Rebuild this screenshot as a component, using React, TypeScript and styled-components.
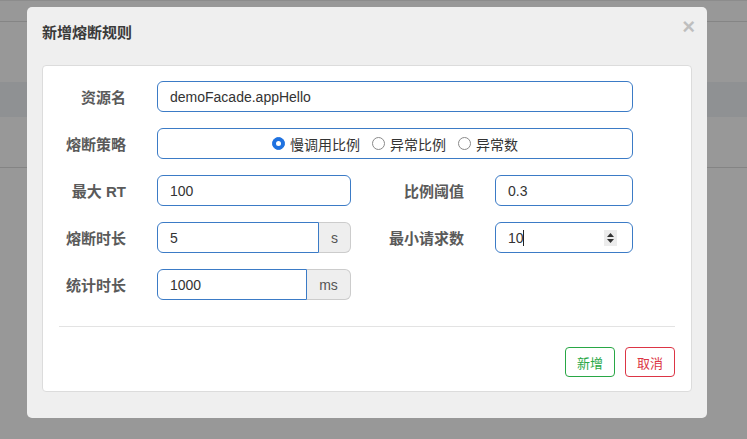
import React from 'react';
import styled, { createGlobalStyle } from 'styled-components';

const GlobalStyle = createGlobalStyle`
  html, body {
    margin: 0;
    padding: 0;
  }
  body {
    font-family: "Liberation Sans", "Noto Sans CJK SC", sans-serif;
    background: #989898;
  }
  * {
    box-sizing: border-box;
  }
`;

const Page = styled.div`
  position: relative;
  width: 747px;
  height: 439px;
  overflow: hidden;
  background: #989898;
  display: flex;
  flex-direction: column;
`;

// the page behind the backdrop, only a few rules show through
const Rule = styled.div<{ $top: number; $color?: string; $h?: number }>`
  margin-top: ${(p) => p.$top}px;
  height: ${(p) => p.$h ?? 1}px;
  background: ${(p) => p.$color ?? '#858585'};
  flex-shrink: 0;
`;

const Modal = styled.div`
  position: absolute;
  left: 27px;
  top: 7px;
  width: 680px;
  background: #efefef;
  border-radius: 5px;
  padding: 15px 15px 26px;
`;

const Title = styled.h4`
  margin: 0 0 21px;
  font-size: 15px;
  line-height: 22px;
  font-weight: 600;
  color: #3a3a3a;
`;

const Close = styled.button`
  position: absolute;
  top: 9px;
  right: 12px;
  border: none;
  background: transparent;
  padding: 0;
  font-family: "Liberation Sans", sans-serif;
  font-size: 22px;
  line-height: 22px;
  font-weight: bold;
  color: #000;
  opacity: 0.2;
  cursor: pointer;
`;

const Panel = styled.div`
  background: #fff;
  border: 1px solid #dcdcdc;
  border-radius: 4px;
  padding: 15px 16px 14px;
`;

const Form = styled.div`
  display: grid;
  grid-template-columns: 67px 194px 82px 138px;
  grid-auto-rows: 31px;
  column-gap: 31px;
  row-gap: 16px;
`;

const Label = styled.label`
  display: flex;
  align-items: center;
  justify-content: flex-end;
  font-size: 15px;
  font-weight: 600;
  color: #5a5a5a;
  white-space: nowrap;
`;

const Field = styled.div<{ $span?: number }>`
  grid-column: span ${(p) => p.$span ?? 1};
  display: flex;
  position: relative;
`;

const Input = styled.input<{ $addon?: boolean }>`
  flex: 1;
  min-width: 0;
  height: 31px;
  border: 1px solid #3b7bc6;
  border-radius: ${(p) => (p.$addon ? '6px 0 0 6px' : '6px')};
  padding: 0 12px;
  font-family: "Liberation Sans", "Noto Sans CJK SC", sans-serif;
  font-size: 14px;
  color: #333;
  background: #fff;
  outline: none;
`;

const Addon = styled.span<{ $w: number }>`
  width: ${(p) => p.$w}px;
  height: 31px;
  display: flex;
  align-items: center;
  justify-content: center;
  background: #eee;
  border: 1px solid #ccc;
  border-left: none;
  border-radius: 0 6px 6px 0;
  font-size: 14px;
  color: #555;
`;

const RadioBox = styled.div`
  flex: 1;
  height: 31px;
  border: 1px solid #3b7bc6;
  border-radius: 6px;
  display: flex;
  align-items: center;
  justify-content: center;
  gap: 12px;
`;

const RadioItem = styled.label`
  display: flex;
  align-items: center;
  gap: 5px;
  font-size: 14px;
  color: #333;
  font-family: "Noto Sans CJK SC", sans-serif;
`;

const RadioDot = styled.span<{ $on?: boolean }>`
  width: 13px;
  height: 13px;
  border-radius: 50%;
  flex-shrink: 0;
  background: ${(p) => (p.$on ? '#1f72e0' : '#fff')};
  border: 1px solid ${(p) => (p.$on ? '#1f72e0' : '#8a8a8a')};
  display: flex;
  align-items: center;
  justify-content: center;
  &::after {
    content: '';
    width: 5px;
    height: 5px;
    border-radius: 50%;
    background: #fff;
    display: ${(p) => (p.$on ? 'block' : 'none')};
  }
`;

const Spinner = styled.span`
  position: absolute;
  right: 16px;
  top: 8px;
  width: 13px;
  height: 16px;
  background: #ececec;
  display: flex;
  align-items: center;
  justify-content: center;
`;

const Caret = styled.span`
  position: absolute;
  left: 28px;
  top: 8px;
  width: 1px;
  height: 16px;
  background: #222;
`;

const Divider = styled.hr`
  margin: 26px 0 0;
  border: none;
  border-top: 1px solid #e3e3e3;
`;

const Footer = styled.div`
  display: flex;
  justify-content: flex-end;
  gap: 10px;
  margin-top: 20px;
`;

const Btn = styled.button<{ $color: string }>`
  width: 50px;
  height: 30px;
  background: #fff;
  border: 1px solid ${(p) => p.$color};
  color: ${(p) => p.$color};
  border-radius: 4px;
  font-family: "Noto Sans CJK SC", sans-serif;
  font-size: 13px;
  padding: 0;
  cursor: pointer;
`;

export default function App() {
  return (
    <Page>
      <GlobalStyle />
      <Rule $top={0} $color="#8c8c8c" />
      <Rule $top={20} />
      <Rule $top={60} $h={35} $color="#8f9193" />
      <Rule $top={50} $color="#848484" />

      <Modal>
        <Title>新增熔断规则</Title>
        <Close>×</Close>
        <Panel>
          <Form>
            <Label>资源名</Label>
            <Field $span={3}>
              <Input readOnly value="demoFacade.appHello" />
            </Field>

            <Label>熔断策略</Label>
            <Field $span={3}>
              <RadioBox>
                <RadioItem>
                  <RadioDot $on />
                  慢调用比例
                </RadioItem>
                <RadioItem>
                  <RadioDot />
                  异常比例
                </RadioItem>
                <RadioItem>
                  <RadioDot />
                  异常数
                </RadioItem>
              </RadioBox>
            </Field>

            <Label>最大 RT</Label>
            <Field>
              <Input readOnly value="100" />
            </Field>
            <Label>比例阈值</Label>
            <Field>
              <Input readOnly value="0.3" />
            </Field>

            <Label>熔断时长</Label>
            <Field>
              <Input $addon readOnly value="5" />
              <Addon $w={32}>s</Addon>
            </Field>
            <Label>最小请求数</Label>
            <Field>
              <Input readOnly value="10" />
              <Caret />
              <Spinner>
                <svg width="9" height="12" viewBox="0 0 9 12">
                  <path d="M4.5 1 L8 5 H1 Z" fill="#333" />
                  <path d="M4.5 11 L8 7 H1 Z" fill="#333" />
                </svg>
              </Spinner>
            </Field>

            <Label>统计时长</Label>
            <Field>
              <Input $addon readOnly value="1000" />
              <Addon $w={44}>ms</Addon>
            </Field>
          </Form>
          <Divider />
          <Footer>
            <Btn $color="#28a745">新增</Btn>
            <Btn $color="#dc3545">取消</Btn>
          </Footer>
        </Panel>
      </Modal>
    </Page>
  );
}
